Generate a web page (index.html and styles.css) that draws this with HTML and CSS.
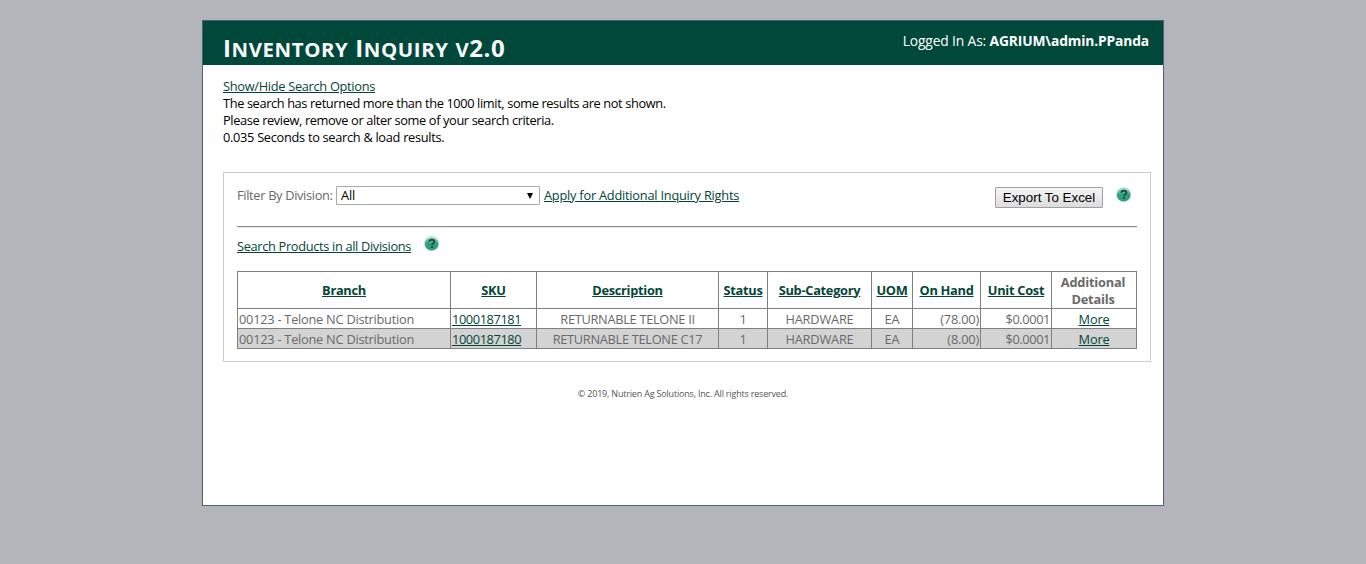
FILE: index.html
```html
<!DOCTYPE html>
<html lang="en">
<head>
<meta charset="utf-8">
<title>Inventory Inquiry</title>
<link rel="stylesheet" href="styles.css">
</head>
<body>
<svg class="defs" width="0" height="0" aria-hidden="true">
  <defs>
    <linearGradient id="ball" x1="0" y1="0" x2="0" y2="1">
      <stop offset="0" stop-color="#b5e0cf"/>
      <stop offset=".35" stop-color="#5bb795"/>
      <stop offset=".5" stop-color="#2f9f77"/>
      <stop offset="1" stop-color="#2fa078"/>
    </linearGradient>
    <symbol id="help" viewBox="0 0 16 16">
      <circle cx="7.700" cy="7.700" r="7.200" fill="url(#ball)" stroke="#d5e9e1" stroke-width=".8"/>
      <path d="M5.300 5.800C5.300 4.300 6.300 3.700 7.800 3.700s2.600.700 2.600 2C10.400 7.300 8 7.300 8 9" fill="none" stroke="#13573f" stroke-width="2"/>
      <rect x="6.900" y="10" width="2.200" height="2" fill="#13573f"/>
    </symbol>
  </defs>
</svg>
<div class="page">
  <header class="header">
    <h1 class="title">I<span class="sc">nventory</span> I<span class="sc">nquiry</span> <span class="sc">v</span>2.0</h1>
    <div class="login">Logged In As: <b>AGRIUM\admin.PPanda</b></div>
  </header>
  <main class="main">
    <div class="messages">
      <div><a class="toggle" href="#">Show/Hide Search Options</a></div>
      <div class="notice">The search has returned more than the 1000 limit, some results are not shown.</div>
      <div class="notice">Please review, remove or alter some of your search criteria.</div>
      <div class="timing">0.035 Seconds to search &amp; load results.</div>
    </div>
    <section class="panel">
      <div class="filter">
        <label class="filter-label" for="division">Filter By Division:</label>
        <div class="select" id="division"><span>All</span><svg width="6" height="6" viewBox="0 0 6 6"><path d="M0 0h6L3 6z"/></svg></div>
        <a class="apply" href="#">Apply for Additional Inquiry Rights</a>
        <button class="export" type="button">Export To Excel</button>
        <svg class="help" width="16" height="16"><use href="#help"/></svg>
      </div>
      <hr class="rule">
      <div class="products">
        <a href="#">Search Products in all Divisions</a>
        <svg class="help" width="16" height="16"><use href="#help"/></svg>
      </div>
      <table class="grid">
        <colgroup><col class="c1"><col class="c2"><col class="c3"><col class="c4"><col class="c5"><col class="c6"><col class="c7"><col class="c8"><col class="c9"></colgroup>
        <thead>
          <tr><th><a href="#">Branch</a></th><th><a href="#">SKU</a></th><th><a href="#">Description</a></th><th><a href="#">Status</a></th><th><a href="#">Sub-Category</a></th><th><a href="#">UOM</a></th><th><a href="#">On Hand</a></th><th><a href="#">Unit Cost</a></th><th class="details">Additional Details</th></tr>
        </thead>
        <tbody>
          <tr><td class="left branch">00123 - Telone NC Distribution</td><td class="left sku"><a href="#">1000187181</a></td><td class="desc">RETURNABLE TELONE II</td><td>1</td><td>HARDWARE</td><td>EA</td><td class="right">(78.00)</td><td class="right cost">$0.0001</td><td><a href="#">More</a></td></tr>
          <tr class="alt"><td class="left branch">00123 - Telone NC Distribution</td><td class="left sku"><a href="#">1000187180</a></td><td class="desc">RETURNABLE TELONE C17</td><td>1</td><td>HARDWARE</td><td>EA</td><td class="right">(8.00)</td><td class="right cost">$0.0001</td><td><a href="#">More</a></td></tr>
        </tbody>
      </table>
    </section>
  </main>
  <footer class="footer">© 2019, Nutrien Ag Solutions, Inc. All rights reserved.</footer>
</div>
</body>
</html>
```
FILE: styles.css
```css
* { box-sizing: border-box; }
body {
  margin: 0;
  padding-top: 20px;
  background: #b4b5bb;
  font: 12.8px/17px "Open Sans", "Noto Sans", sans-serif;
  color: #696969;
  letter-spacing: -0.2px;
}
.defs { display: block; height: 0; }
a { color: #034638; text-decoration: underline; }
.page {
  width: 962px;
  height: 486px;
  margin: 0 auto;
  background: #fff;
  border: 1px solid #496077;
}
.header {
  display: flex;
  justify-content: space-between;
  height: 44px;
  padding: 0 14px 0 20px;
  background: #00483a;
  color: #fff;
}
.title {
  margin: 0;
  padding-top: 11px;
  font-size: 24px;
  line-height: 32px;
  font-weight: 700;
  letter-spacing: 0.6px;
  color: #f9f9f9;
  white-space: nowrap;
}
.sc { font-size: 20.4px; text-transform: uppercase; }
.login { padding-top: 11px; font-size: 13.8px; letter-spacing: -0.13px; }
.main { padding: 13px 12px 0 20px; }
.messages { color: #000; height: 94px; }
.toggle, .timing { letter-spacing: -0.3px; }
.notice { letter-spacing: -0.38px; }
.panel {
  height: 190px;
  border: 1px solid #ccc;
  padding: 13px;
}
.filter { display: flex; align-items: flex-start; height: 40px; }
.filter-label { width: 99px; padding-top: 1px; white-space: nowrap; letter-spacing: -0.32px; }
.select {
  display: flex;
  align-items: center;
  justify-content: space-between;
  width: 204px;
  height: 19px;
  padding: 0 6px 0 4px;
  border: 1px solid #a9a9a9;
  border-radius: 1px;
  color: #000;
}
.apply { margin-left: 4px; padding-top: 1px; letter-spacing: -0.23px; }
.export {
  width: 108px;
  height: 21px;
  margin: 1px 13px 0 auto;
  padding: 0;
  border: 1px solid #a0a0a0;
  border-radius: 1px;
  background: linear-gradient(#f5f5f5, #dcdcdc);
  font: 13.33px/19px "Liberation Sans", Arial, sans-serif;
  color: #000;
}
.filter .help { margin: 1px 5px 0 0; }
.rule { height: 2px; margin: 0; border: 0; border-top: 1px solid #8f8f8f; background: #e8e8e8; }
.products { display: flex; gap: 13px; height: 43px; padding-top: 10px; letter-spacing: -0.33px; }
.products .help { margin-top: -2px; }
.grid {
  width: 900px;
  table-layout: fixed;
  border-collapse: collapse;
}
.grid th, .grid td { border: 1px solid #808080; padding: 0 1px; text-align: center; white-space: nowrap; }
.grid th { height: 37px; white-space: normal; font-weight: 700; letter-spacing: -0.28px; }
.grid .details { padding: 1px 3px 0 1px; letter-spacing: -0.2px; }
.grid td { height: 20px; padding-top: 2px; }
.grid .left { text-align: left; }
.grid .right { text-align: right; }
.grid .branch { letter-spacing: -0.25px; }
.grid .sku { letter-spacing: -0.4px; }
.grid .desc { letter-spacing: -0.3px; }
.grid .cost { letter-spacing: -0.4px; }
.alt { background: #d3d3d3; }
.c1 { width: 213px; }
.c2 { width: 86px; }
.c3 { width: 182px; }
.c4 { width: 49px; }
.c5 { width: 104px; }
.c6 { width: 41px; }
.c7 { width: 68px; }
.c8 { width: 71px; }
.c9 { width: 85px; }
.footer { padding-top: 23px; text-align: center; font-size: 9px; letter-spacing: -0.19px; color: #555; }
```
